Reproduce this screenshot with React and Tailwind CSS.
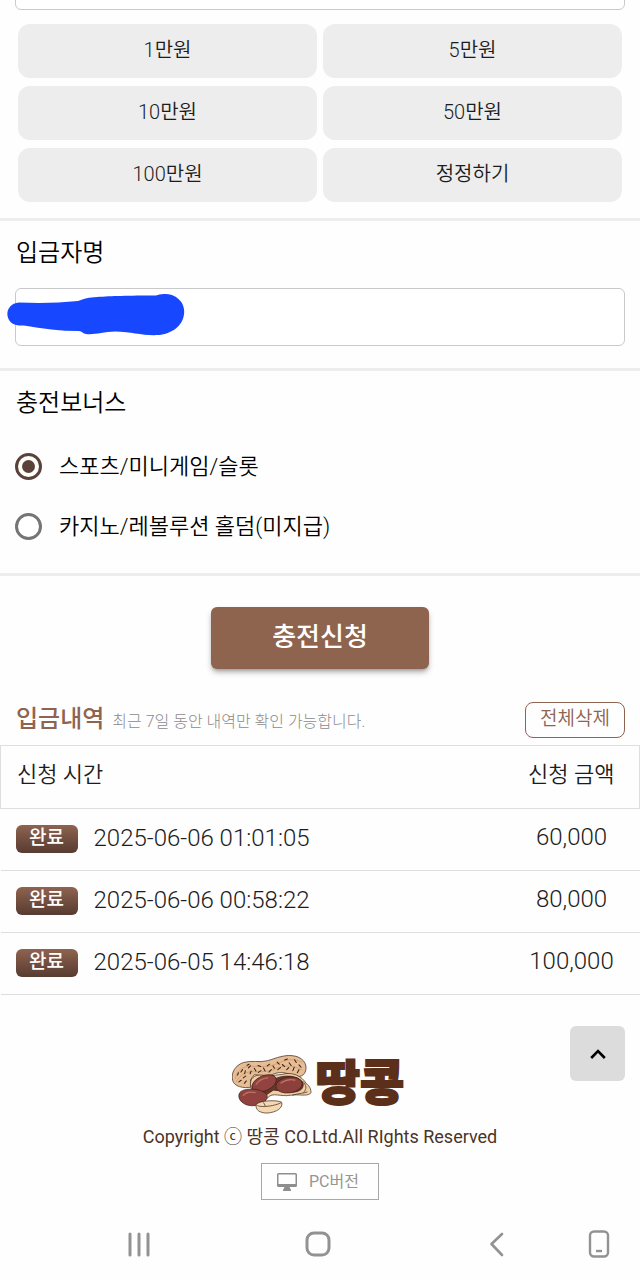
import { useState } from "react";

const amounts = [
  { label: "1만원", value: 10000 },
  { label: "5만원", value: 50000 },
  { label: "10만원", value: 100000 },
  { label: "50만원", value: 500000 },
  { label: "100만원", value: 1000000 },
  { label: "정정하기", value: 0 },
];

const bonuses = [
  { id: "sports", label: "스포츠/미니게임/슬롯" },
  { id: "casino", label: "카지노/레볼루션 홀덤(미지급)" },
];

const history = [
  { time: "2025-06-06 01:01:05", amount: "60,000" },
  { time: "2025-06-06 00:58:22", amount: "80,000" },
  { time: "2025-06-05 14:46:18", amount: "100,000" },
];

export default function App() {
  const [amount, setAmount] = useState(0);
  const [name, setName] = useState("");
  const [bonus, setBonus] = useState("sports");

  const addAmount = (value) => setAmount(value === 0 ? 0 : amount + value);

  return (
    <div className="min-h-screen overflow-hidden bg-[#fefefe] font-['Roboto','Noto_Sans_CJK_KR',sans-serif] font-[350] text-[#1c1c1c]">
      <main>
        <section className="border-b-3 border-[#ededed] pb-4">
          <div className="px-[15px]">
            <input aria-label="충전금액" value={amount || ""} readOnly className="-mt-12 block h-[58px] w-full rounded-md border border-[#c9c9c9] bg-white px-4 text-[22px] outline-none" />
          </div>
          <div className="mt-[14px] grid grid-cols-2 gap-x-[6px] gap-y-2 px-[18px]">
            {amounts.map((a) => (
              <button key={a.label} type="button" onClick={() => addAmount(a.value)} className="h-[54px] rounded-xl bg-[#ededed] pb-[2px] text-xl">{a.label}</button>
            ))}
          </div>
        </section>

        <section className="border-b-3 border-[#ededed] px-[15px] pt-4 pb-[22px]">
          <label htmlFor="depositor" className="block px-px text-2xl text-black">입금자명</label>
          <div className="relative mt-[19px]">
            <input id="depositor" value={name} onChange={(e) => setName(e.target.value)} className="block h-[58px] w-full rounded-md border border-[#c9c9cb] bg-white px-4 text-[22px] outline-none" />
            <Scribble />
          </div>
        </section>

        <section className="border-b-3 border-[#ededed] px-[15px] pt-4 pb-[17px]">
          <h2 className="px-px text-2xl text-black">충전보너스</h2>
          <div className="mt-[17px]">
            {bonuses.map((b) => (
              <label key={b.id} className="flex h-[60px] items-center gap-[17px] text-[22px] text-black">
                <input
                  type="radio"
                  name="bonus"
                  checked={bonus === b.id}
                  onChange={() => setBonus(b.id)}
                  className="size-[27px] appearance-none rounded-full border-3 border-[#757575] bg-white checked:border-[#5b4239] checked:bg-[#5b4239] checked:bg-clip-content checked:p-1"
                />
                {b.label}
              </label>
            ))}
          </div>
        </section>

        <div className="mt-[31px] flex justify-center">
          <button type="button" className="h-[62px] w-[218px] rounded-md bg-[#8f644f] pb-[2px] text-[26px] font-medium text-white shadow-md shadow-black/30">충전신청</button>
        </div>

        <section className="mt-[33px]">
          <div className="flex items-center justify-between px-[15px] pb-[7px]">
            <div className="flex items-baseline gap-2 px-px pb-[2px]">
              <h2 className="text-2xl font-medium text-[#8f644f]">입금내역</h2>
              <p className="text-base font-light text-[#8c8c8c]">최근 7일 동안 내역만 확인 가능합니다.</p>
            </div>
            <button type="button" className="h-9 w-[100px] rounded-lg border border-[#8f644f] pb-[2px] text-[19px] text-[#8f644f]">전체삭제</button>
          </div>
          <table className="w-full text-2xl">
            <thead>
              <tr className="h-[63px] border border-[#dedede] text-[22px]">
                <th className="px-4 pb-1 text-left font-[350]">신청 시간</th>
                <th className="w-[136px] pb-1 text-center font-[350]">신청 금액</th>
              </tr>
            </thead>
            <tbody>
              {history.map((row) => (
                <tr key={row.time} className="h-[62px] border-b border-[#dedede]">
                  <td className="px-[15px] pb-[2px]">
                    <div className="flex items-center gap-4">
                      <span className="h-7 w-[62px] rounded-md bg-linear-to-b from-[#8f644f] to-[#573b31] text-center text-[19px] leading-[26px] font-medium text-white">완료</span>
                      <span className="pb-[2px]">{row.time}</span>
                    </div>
                  </td>
                  <td className="pb-[6px] text-center">{row.amount}</td>
                </tr>
              ))}
            </tbody>
          </table>
        </section>
      </main>

      <footer className="relative flex flex-col items-center pt-[58px]">
        <button type="button" aria-label="위로" onClick={() => window.scrollTo(0, 0)} className="absolute top-[31px] right-[15px] flex size-[55px] items-center justify-center rounded-md bg-[#dcdcdc]">
          <svg viewBox="0 0 16 10" className="h-[10px] w-4" fill="none" stroke="#000" strokeWidth="2.6">
            <path d="M1.2 9 8 2.2 14.8 9" />
          </svg>
        </button>
        <a href="#" className="flex h-[62px] items-center gap-1 pr-1">
          <Peanut />
          <span className="text-5xl leading-[62px] font-black text-[#5c2f1a] [-webkit-text-stroke:2px_#5c2f1a]">땅콩</span>
        </a>
        <p className="mt-2 text-lg font-normal text-[#4b3328]">Copyright ⓒ 땅콩 CO.Ltd.All RIghts Reserved</p>
        <button type="button" className="mt-3 flex h-[37px] w-[118px] items-center justify-center gap-3 border border-[#a8a8a8] pr-1 text-base font-normal text-[#959595]">
          <svg viewBox="0 0 20 18" className="h-[18px] w-5">
            <path fill="#8e8e8e" fillRule="evenodd" d="M1.5 0h17A1.5 1.5 0 0 1 20 1.500v11a1.500 1.500 0 0 1-1.500 1.500H12.500l1.500 3v1H6v-1l1.500-3h-6A1.500 1.500 0 0 1 0 12.500v-11A1.500 1.500 0 0 1 1.500 0ZM1.500 1.500v9.500h17V1.500Z" />
          </svg>
          PC버전
        </button>
      </footer>

      <SystemNav />
    </div>
  );
}

function Scribble() {
  return (
    <svg viewBox="0 0 180 42" className="pointer-events-none absolute top-[6px] -left-2 h-[42px] w-[180px]">
      <path fill="#1747ff" d="M12 8.500C33 9.500 51 9 71 7 77 4.500 82 3.500 90 3 105 2 120 1.500 149 1.500 154-.5 163-1 169 3 175 7 178 13 177 20 176 32 164 40 152 41 136 42 126 38 108 37.500 96 38 87 41 79 40 76 39.500 75 37.500 72 37 53 37 36 35 17 31.500H12C-3 31-4 10 12 8.500Z" />
    </svg>
  );
}

function Peanut() {
  return (
    <svg viewBox="34 27 234 174" className="h-[60px] w-20" stroke="#382018" strokeWidth="2" strokeLinejoin="round">
      <path fill="#e6bd94" d="M36 104C30 82 43 59 68 51 91 44 115 52 137 46 163 39 190 25 221 33 246 40 256 61 248 79 243 92 225 97 209 89 190 78 167 78 149 88 127 99 118 86 99 87L88 102 90 123C68 128 40 121 36 104Z" />
      <path fill="none" stroke="#c8946a" d="M44 99C47 75 66 61 91 62 119 63 139 66 167 54 191 43 214 37 240 51M45 109C56 91 69 80 91 78 119 78 139 80 164 68 185 59 213 58 240 73" />
      <path fill="none" strokeWidth="3" strokeLinecap="round" d="M50 88 53 81M60 79 65 72M73 75 71 84M82 67 88 61M90 76 87 84M99 68 104 76M110 60 118 63M111 80 119 75M126 67 131 76M137 61 144 56M142 79 149 72M154 61 158 68M166 50 172 56M168 72 176 66M181 57 188 63M188 44 196 41M194 72 200 66M201 52 207 60M212 75 216 65M217 43 222 51M225 81 230 72M230 58 236 65M54 108 61 103M67 96 74 91M70 112 76 105M78 59 84 56" />
      <path fill="#f1cfa5" d="M88 112C89 91 107 85 130 89 151 91 164 87 181 86 208 77 239 90 252 114 261 117 269 139 263 142 251 151 229 143 204 147 176 152 153 137 139 154 121 171 88 145 88 112Z" />
      <path fill="#69372a" d="M95 120C100 99 127 88 154 102 181 85 230 86 242 112 245 127 233 137 213 138L155 132 134 146C107 154 96 139 95 120Z" />
      <ellipse cx="128" cy="112" rx="38" ry="22" transform="rotate(-24 128 112)" fill="#92433f" />
      <ellipse cx="201" cy="117" rx="39" ry="23" transform="rotate(-8 201 117)" fill="#8c403c" />
      <path fill="none" stroke="#bd746d" strokeWidth="4" d="M104 116C111 104 124 97 140 96M176 112C188 103 205 99 219 103" />
      <path fill="#91423f" d="M54 148C54 134 70 129 91 129 111 128 136 138 137 150 137 163 122 175 102 177 76 181 53 166 54 148Z" />
      <path fill="none" stroke="#bd746d" strokeWidth="4" d="M66 149C73 138 88 136 103 139" />
      <path fill="#f4d8b1" d="M105 174C113 162 164 160 179 167 185 183 165 197 137 199 116 199 101 190 105 174Z" />
      <path fill="none" d="M108 177C122 184 163 177 177 169M132 179 126 168M240 105C252 118 254 128 243 139M210 147C230 141 245 141 255 137" />
    </svg>
  );
}

function SystemNav() {
  const button = "flex h-10 items-center justify-center";
  return (
    <nav className="mt-6 grid grid-cols-[178fr_180fr_178fr_26fr] pr-7 pl-[50px] text-[#929292]" aria-label="시스템">
      <button type="button" aria-label="최근 앱" className={button}>
        <svg viewBox="0 0 24 26" className="h-[26px] w-6" fill="none" stroke="currentColor" strokeWidth="3" strokeLinecap="round">
          <path d="M3 3v21M12 3v21M21 3v21" />
        </svg>
      </button>
      <button type="button" aria-label="홈" className={button}>
        <svg viewBox="0 0 26 26" className="size-[26px]" fill="none" stroke="currentColor" strokeWidth="3">
          <rect x="2" y="2" width="22" height="22" rx="7" />
        </svg>
      </button>
      <button type="button" aria-label="뒤로" className={button}>
        <svg viewBox="0 0 16 26" className="h-[26px] w-4" fill="none" stroke="currentColor" strokeWidth="2.600" strokeLinecap="round" strokeLinejoin="round">
          <path d="M13 3 2.500 13 13 24" />
        </svg>
      </button>
      <button type="button" aria-label="한 손 모드" className={button}>
        <svg viewBox="0 0 22 28" className="h-7 w-[22px] shrink-0" fill="none" stroke="currentColor" strokeWidth="2.400">
          <rect x="2" y="1.500" width="18" height="25" rx="4" />
          <path d="M8 21h6" />
        </svg>
      </button>
    </nav>
  );
}
